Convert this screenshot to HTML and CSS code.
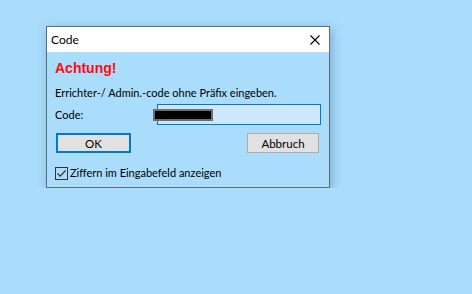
FILE: index.html
```html
<!DOCTYPE html>
<html>

<head>
  <link rel="stylesheet" href="styles.css">
</head>

<body>

  <div class="dialog">

    <div class="titleBar">
      <span class="titleText">Code</span>
      <svg class="closeIcon" width="10" height="10" viewBox="0 0 10 10">
        <path d="M0.5 0.5 L9.5 9.5 M9.5 0.5 L0.5 9.5" stroke="#000" stroke-width="1.1" fill="none" />
      </svg>
    </div>

    <div class="dialogBody">

      <div class="warning">Achtung!</div>

      <div class="hint">Errichter-/ Admin.-code ohne Präfix eingeben.</div>

      <div class="codeRow">
        <span class="codeLabel">Code:</span>
        <div class="codeInput">
          <div class="mask"></div>
        </div>
      </div>

      <div class="buttonRow">
        <button class="btn btnDefault">OK</button>
        <button class="btn">Abbruch</button>
      </div>

      <label class="checkRow">
        <span class="checkBox">
          <svg width="11" height="11" viewBox="0 0 11 11">
            <path d="M1.5 5.5 L4.2 8.2 L9.5 2.5" stroke="#333" stroke-width="1.2" fill="none" />
          </svg>
        </span>
        Ziffern im Eingabefeld anzeigen
      </label>

    </div>

  </div>

</body>

</html>
```

FILE: styles.css
```css
body {
  margin: 0;
  background-color: #aadcfc;
  font-family: Lato, "Noto Sans", sans-serif;
  font-size: 11px;
  color: #000;
}

.dialog {
  width: 284px;
  height: 162px;
  margin: 26px 0 0 46px;
  box-sizing: border-box;
  border: 1px solid #5b6c7c;
  background-color: #aadcfc;
  box-shadow: 2px 3px 10px rgba(40, 80, 120, 0.35);
  display: flex;
  flex-direction: column;
}

.titleBar {
  height: 25px;
  background-color: #fff;
  display: flex;
  align-items: center;
  justify-content: space-between;
  padding: 0 9px 0 4px;
}

.titleText {
  font-size: 12px;
  line-height: 25px;
}

.dialogBody {
  flex: 1;
  padding: 8px 8px 0 8px;
  display: flex;
  flex-direction: column;
}

.warning {
  font-family: "Liberation Sans", Arial, sans-serif;
  font-weight: bold;
  font-size: 14px;
  color: #ff0a0a;
  line-height: 17px;
}

.hint {
  margin-top: 8px;
  line-height: 16px;
}

.codeRow {
  margin-top: 3px;
  display: flex;
  align-items: center;
}

.codeLabel {
  width: 102px;
}

.codeInput {
  position: relative;
  width: 165px;
  height: 21px;
  box-sizing: border-box;
  border: 1px solid #0078d7;
  background-color: #cce8fa;
}

.mask {
  position: absolute;
  left: -5px;
  top: 4px;
  width: 56px;
  height: 8px;
  border: 2px solid #6d6d6d;
  background-color: #000;
}

.buttonRow {
  margin-top: 8px;
  display: flex;
  justify-content: space-between;
  padding-right: 2px;
}

.btn {
  width: 72px;
  height: 20px;
  box-sizing: border-box;
  border: 1px solid #adadad;
  background-color: #e1e1e1;
  font-family: inherit;
  font-size: 11.5px;
  padding: 0;
  color: #000;
}

.btnDefault {
  width: 75px;
  border: 2px solid #0078d7;
  margin-left: 1px;
}

.checkRow {
  margin-top: 12px;
  display: flex;
  align-items: center;
  line-height: 16px;
}

.checkBox {
  width: 13px;
  height: 13px;
  box-sizing: border-box;
  border: 1px solid #333;
  background-color: transparent;
  margin-right: 2px;
  display: flex;
  align-items: center;
  justify-content: center;
}
```
